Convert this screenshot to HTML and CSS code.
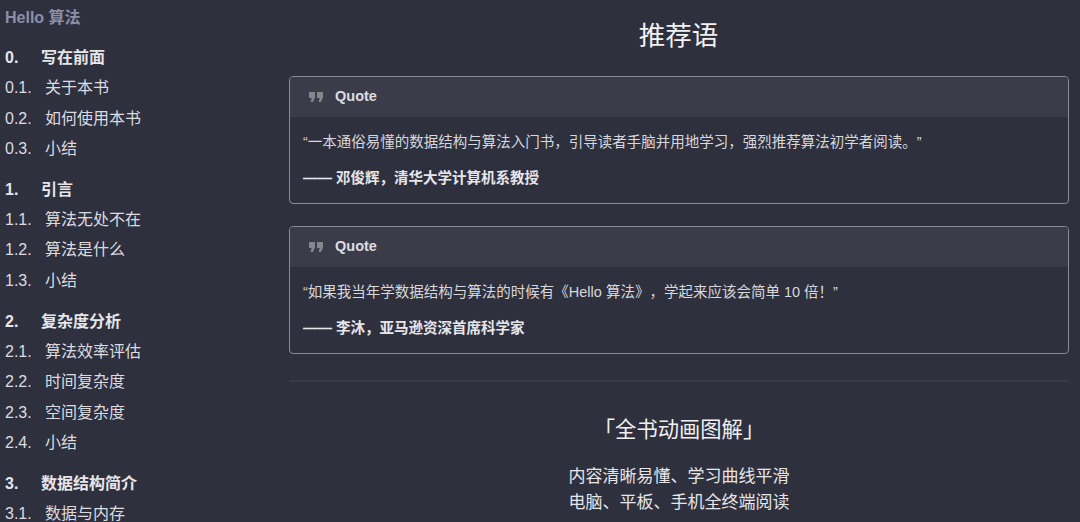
FILE: index.html
```html
<!DOCTYPE html>
<html lang="zh-CN">
<head>
    <meta charset="UTF-8">
    <title>Hello 算法</title>
    <link rel="stylesheet" href="styles.css">
</head>
<body>
    <nav class="sidebar">
        <div class="site-title">Hello 算法</div>

        <ul class="toc">
            <li class="chapter"><span class="num">0.</span>写在前面</li>
            <li><span class="num">0.1.</span>关于本书</li>
            <li><span class="num">0.2.</span>如何使用本书</li>
            <li><span class="num">0.3.</span>小结</li>
        </ul>
        <ul class="toc">
            <li class="chapter"><span class="num">1.</span>引言</li>
            <li><span class="num">1.1.</span>算法无处不在</li>
            <li><span class="num">1.2.</span>算法是什么</li>
            <li><span class="num">1.3.</span>小结</li>
        </ul>
        <ul class="toc">
            <li class="chapter"><span class="num">2.</span>复杂度分析</li>
            <li><span class="num">2.1.</span>算法效率评估</li>
            <li><span class="num">2.2.</span>时间复杂度</li>
            <li><span class="num">2.3.</span>空间复杂度</li>
            <li><span class="num">2.4.</span>小结</li>
        </ul>
        <ul class="toc">
            <li class="chapter"><span class="num">3.</span>数据结构简介</li>
            <li><span class="num">3.1.</span>数据与内存</li>
        </ul>
    </nav>

    <main class="content">
        <h1>推荐语</h1>

        <div class="quote">
            <div class="quote-title">
                <svg class="quote-icon" viewBox="0 0 16 12"><path d="M1 1h6v5.500L5 11H2.500l1.200-4H1zM9 1h6v5.500L13 11h-2.500l1.200-4H9z"/></svg>
                Quote
            </div>
            <p>“一本通俗易懂的数据结构与算法入门书，引导读者手脑并用地学习，强烈推荐算法初学者阅读。”</p>
            <p class="who">—— 邓俊辉，清华大学计算机系教授</p>
        </div>

        <div class="quote">
            <div class="quote-title">
                <svg class="quote-icon" viewBox="0 0 16 12"><path d="M1 1h6v5.500L5 11H2.500l1.200-4H1zM9 1h6v5.500L13 11h-2.500l1.200-4H9z"/></svg>
                Quote
            </div>
            <p>“如果我当年学数据结构与算法的时候有《Hello 算法》，学起来应该会简单 10 倍！”</p>
            <p class="who">—— 李沐，亚马逊资深首席科学家</p>
        </div>

        <hr>

        <h2>「全书动画图解」</h2>
        <p class="blurb">内容清晰易懂、学习曲线平滑<br>电脑、平板、手机全终端阅读</p>
    </main>
</body>
</html>
```

FILE: styles.css
```css
html, body {
    height: 100%;
}

body {
    margin: 0;
    height: 522px;
    overflow: hidden;
    display: flex;
    background-color: #2e303e;
    color: #e2e2e6;
    font-family: "Liberation Sans", "Noto Sans CJK SC", sans-serif;
    text-spacing-trim: space-all;
    font-kerning: none;
}

/* Sidebar */
.sidebar {
    width: 289px;
    flex-shrink: 0;
    padding: 9px 0 0 5px;
    box-sizing: border-box;
}

.site-title {
    font-size: 16px;
    font-weight: bold;
    line-height: 18px;
    color: #8d8fa8;
    margin-bottom: 16px;
}

.toc {
    list-style: none;
    margin: 0 0 10.7px;
    padding: 0;
}

.toc li {
    display: flex;
    height: 30.3px;
    line-height: 30.3px;
    font-size: 16px;
    color: #dcdce0;
    white-space: nowrap;
}

.toc .num {
    width: 40px;
}

.toc .chapter {
    font-weight: bold;
    color: #e6e6ea;
}

.toc .chapter .num {
    width: 36px;
}

/* Main */
.content {
    width: 780px;
    flex-shrink: 0;
}

h1 {
    margin: 19px 0 23px;
    padding-right: 1px;
    font-size: 26.5px;
    font-weight: normal;
    line-height: 34px;
    text-align: center;
    color: #f2f2f4;
}

.quote {
    height: 128px;
    box-sizing: border-box;
    margin-bottom: 22px;
    border: 1px solid #8a8a92;
    border-radius: 4px;
    overflow: hidden;
    font-size: 14.5px;
}

.quote-title {
    display: flex;
    align-items: center;
    height: 37px;
    padding-bottom: 3px;
    padding-left: 18px;
    background-color: #3b3c4a;
    font-weight: bold;
    color: #dcdce0;
}

.quote-icon {
    width: 16px;
    height: 12px;
    margin-top: 2px;
    margin-right: 11px;
    fill: #85858c;
}

.quote p {
    margin: 15px 13px 0;
    line-height: 20px;
    color: #d8d8dc;
}

.quote .who {
    margin-top: 16px;
    font-weight: bold;
    color: #e6e6ea;
}

hr {
    height: 2px;
    margin: 26px 0 0;
    border: none;
    background-color: #383a48;
}

h2 {
    margin: 33px 0 19px;
    font-size: 21.3px;
    font-weight: normal;
    line-height: 30px;
    text-align: center;
    color: #f0f0f2;
}

.blurb {
    margin: 0;
    font-size: 17px;
    line-height: 26px;
    text-align: center;
    color: #e6e6ea;
}
```
